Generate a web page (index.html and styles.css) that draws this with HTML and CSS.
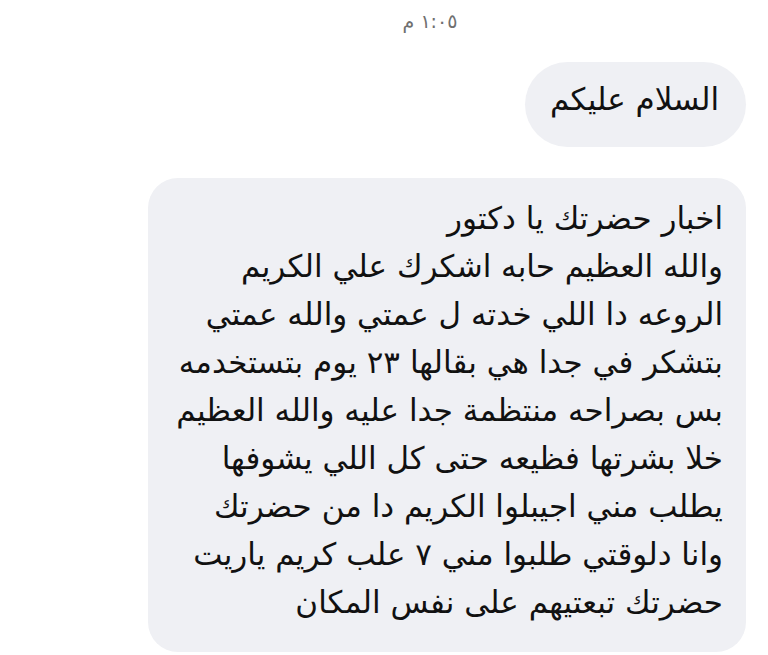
FILE: index.html
```html
<!DOCTYPE html>
<html lang="ar" dir="rtl">
<head>
<meta charset="utf-8">
<title>Chat</title>
<link rel="stylesheet" href="styles.css">
</head>
<body>
<div class="chat">
  <div class="time">١:٠٥ م</div>
  <div class="bubble short">السلام عليكم</div>
  <div class="bubble long">
    <div class="line">اخبار حضرتك يا دكتور</div>
    <div class="line">والله العظيم حابه اشكرك علي الكريم</div>
    <div class="line">الروعه دا اللي خدته ل عمتي والله عمتي</div>
    <div class="line">بتشكر في جدا هي بقالها ٢٣ يوم بتستخدمه</div>
    <div class="line">بس بصراحه منتظمة جدا عليه والله العظيم</div>
    <div class="line">خلا بشرتها فظيعه حتى كل اللي يشوفها</div>
    <div class="line">يطلب مني اجيبلوا الكريم دا من حضرتك</div>
    <div class="line">وانا دلوقتي طلبوا مني ٧ علب كريم ياريت</div>
    <div class="line">حضرتك تبعتيهم على نفس المكان</div>
  </div>
</div>
</body>
</html>
```
FILE: styles.css
```css
html, body {
  margin: 0;
  padding: 0;
  background: #ffffff;
}
body {
  font-family: "DejaVu Sans", "Noto Sans", sans-serif;
  color: #111111;
  width: 768px;
  height: 655px;
  overflow: hidden;
}
.chat {
  display: flex;
  flex-direction: column;
  align-items: flex-start;
  padding: 0 22px;
}
.time {
  align-self: center;
  font-size: 19px;
  line-height: 22px;
  color: #707070;
  padding-top: 10px;
  margin-left: 92px;
  height: 30px;
  margin-bottom: 22px;
}
.bubble {
  background: #eff0f4;
  font-size: 31px;
  line-height: 48px;
}
.short {
  border-radius: 43px;
  padding: 13px 27px 24px 25px;
}
.long {
  margin-top: 31px;
  width: 598px;
  box-sizing: border-box;
  border-radius: 30px;
  padding: 16px 23px 26px 24px;
}
.line {
  white-space: nowrap;
}
```
